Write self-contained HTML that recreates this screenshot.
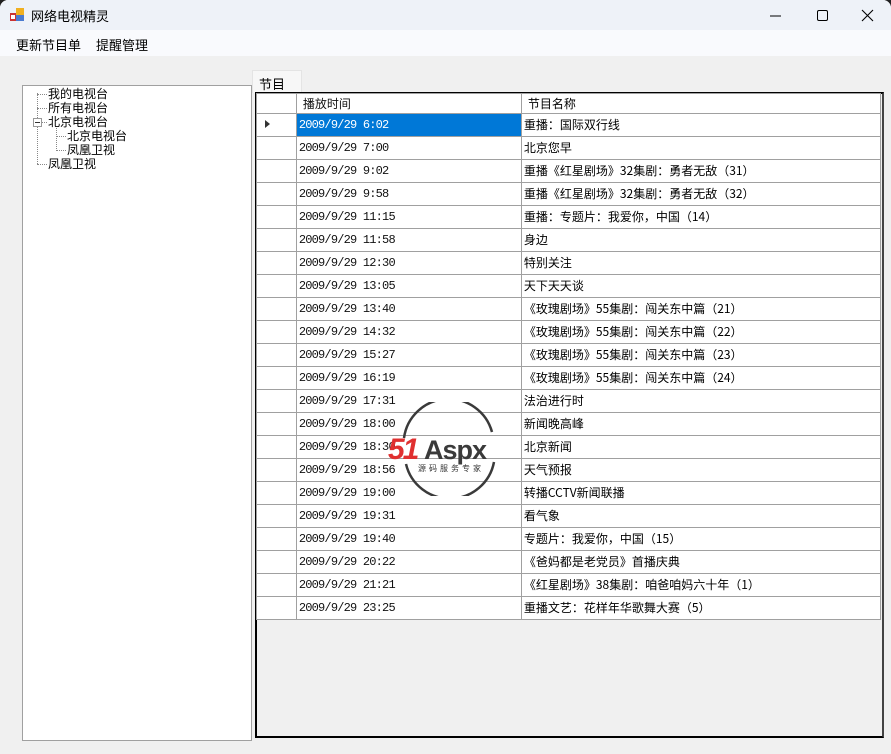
<!DOCTYPE html>
<html><head><meta charset="utf-8"><style>
*{margin:0;padding:0;box-sizing:border-box}
body{width:891px;height:754px;overflow:hidden;background:#202020;font-family:"Liberation Sans","Noto Sans CJK SC",sans-serif;font-size:12px;color:#000;position:relative}
#win{position:absolute;left:0;top:0;width:891px;height:754px;background:#f0f0f0;border-radius:8px 8px 0 0;overflow:hidden}
#title{position:absolute;left:0;top:0;width:891px;height:30px;background:#eef2f8}
#title .t{position:absolute;left:31px;top:6px;font-size:13px}
#menu{position:absolute;left:0;top:30px;width:891px;height:26px;background:#f9fafd}
#menu span{position:absolute;top:5px;font-size:13px}
#tree{position:absolute;left:22px;top:85px;width:230px;height:656px;background:#fff;border:1px solid #a0a0a0}
#tree div{position:absolute;font-size:12px;line-height:14px}
.dot{position:absolute;border-color:#888;border-style:dotted;border-width:0}
#tab{position:absolute;left:252px;top:70px;width:50px;height:23px;background:#f7f7f7;border:1px solid #e4e4e4;border-bottom:none;padding:3px 0 0 6px;font-size:13px}
#grid{position:absolute;left:255px;top:92px;width:629px;height:646px;border:2px solid #000;background:#f0f0f0;border-right-color:#444}
table{border-collapse:collapse;position:absolute;left:-1px;top:-1px}
td{border:1px solid #a0a0a0;height:23px;background:#fff;padding:0 0 0 2px;white-space:nowrap;vertical-align:middle}
td.rh{width:40px;background:#fff}
td.d{width:226px;font-family:"Liberation Mono","Noto Sans CJK SC",monospace;font-size:12px;letter-spacing:-0.8px;color:#111}
td.n{width:360px;font-size:12px;font-family:"Noto Sans CJK SC",sans-serif;line-height:14px}
tr.h td{height:20px;padding-left:6px}
tr.sel td.d{background:#0078d7;color:#fff}
</style></head><body><div id="win">
<div id="title">
<svg style="position:absolute;left:10px;top:8px" width="14" height="14"><rect x="0" y="5" width="7" height="8" fill="#c33"/><rect x="6" y="0" width="8" height="7" fill="#f0b020"/><rect x="6" y="7" width="8" height="6" fill="#4a7bd0"/><rect x="1" y="7" width="4" height="4" fill="#fff"/></svg>
<span class="t">网络电视精灵</span>
<svg style="position:absolute;left:770px;top:9px" width="110" height="14"><line x1="0" y1="7" x2="11" y2="7" stroke="#000"/><rect x="47.5" y="1.5" width="10" height="10" rx="1.5" fill="none" stroke="#000"/><path d="M92 1L103 12M103 1L92 12" stroke="#000" stroke-width="1.1"/></svg>
</div>
<div id="menu"><span style="left:16px">更新节目单</span><span style="left:96px">提醒管理</span></div>
<div id="tree">
<span class="dot" style="left:14px;top:7px;height:71px;border-left-width:1px"></span>
<span class="dot" style="left:14px;top:8px;width:10px;border-top-width:1px"></span>
<span class="dot" style="left:14px;top:22px;width:10px;border-top-width:1px"></span>
<span class="dot" style="left:14px;top:78px;width:10px;border-top-width:1px"></span>
<span class="dot" style="left:33px;top:42px;height:23px;border-left-width:1px"></span>
<span class="dot" style="left:33px;top:50px;width:10px;border-top-width:1px"></span>
<span class="dot" style="left:33px;top:64px;width:10px;border-top-width:1px"></span>
<span style="position:absolute;left:10px;top:32px;width:9px;height:9px;border:1px solid #999;background:#fff"></span>
<span style="position:absolute;left:12px;top:36px;width:5px;height:1px;background:#333"></span>
<span class="dot" style="left:19px;top:36px;width:5px;border-top-width:1px"></span>
<div style="left:25px;top:1px">我的电视台</div>
<div style="left:25px;top:15px">所有电视台</div>
<div style="left:25px;top:29px">北京电视台</div>
<div style="left:44px;top:43px">北京电视台</div>
<div style="left:44px;top:57px">凤凰卫视</div>
<div style="left:25px;top:71px">凤凰卫视</div>
</div>
<div id="tab">节目</div>
<div id="grid"><table>
<tr class="h"><td class="rh"></td><td class="d" style="font-family:'Liberation Sans','Noto Sans CJK SC',sans-serif;font-size:12px;letter-spacing:0">播放时间</td><td class="n">节目名称</td></tr>
<tr class="sel"><td class="rh"><svg width="10" height="10" style="margin-left:4px"><path d="M2 1L7 5L2 9Z" fill="#333"/></svg></td><td class="d">2009/9/29 6:02</td><td class="n">重播：国际双行线</td></tr>
<tr><td class="rh"></td><td class="d">2009/9/29 7:00</td><td class="n">北京您早</td></tr>
<tr><td class="rh"></td><td class="d">2009/9/29 9:02</td><td class="n">重播《红星剧场》32集剧：勇者无敌（31）</td></tr>
<tr><td class="rh"></td><td class="d">2009/9/29 9:58</td><td class="n">重播《红星剧场》32集剧：勇者无敌（32）</td></tr>
<tr><td class="rh"></td><td class="d">2009/9/29 11:15</td><td class="n">重播：专题片：我爱你，中国（14）</td></tr>
<tr><td class="rh"></td><td class="d">2009/9/29 11:58</td><td class="n">身边</td></tr>
<tr><td class="rh"></td><td class="d">2009/9/29 12:30</td><td class="n">特别关注</td></tr>
<tr><td class="rh"></td><td class="d">2009/9/29 13:05</td><td class="n">天下天天谈</td></tr>
<tr><td class="rh"></td><td class="d">2009/9/29 13:40</td><td class="n">《玫瑰剧场》55集剧：闯关东中篇（21）</td></tr>
<tr><td class="rh"></td><td class="d">2009/9/29 14:32</td><td class="n">《玫瑰剧场》55集剧：闯关东中篇（22）</td></tr>
<tr><td class="rh"></td><td class="d">2009/9/29 15:27</td><td class="n">《玫瑰剧场》55集剧：闯关东中篇（23）</td></tr>
<tr><td class="rh"></td><td class="d">2009/9/29 16:19</td><td class="n">《玫瑰剧场》55集剧：闯关东中篇（24）</td></tr>
<tr><td class="rh"></td><td class="d">2009/9/29 17:31</td><td class="n">法治进行时</td></tr>
<tr><td class="rh"></td><td class="d">2009/9/29 18:00</td><td class="n">新闻晚高峰</td></tr>
<tr><td class="rh"></td><td class="d">2009/9/29 18:30</td><td class="n">北京新闻</td></tr>
<tr><td class="rh"></td><td class="d">2009/9/29 18:56</td><td class="n">天气预报</td></tr>
<tr><td class="rh"></td><td class="d">2009/9/29 19:00</td><td class="n">转播CCTV新闻联播</td></tr>
<tr><td class="rh"></td><td class="d">2009/9/29 19:31</td><td class="n">看气象</td></tr>
<tr><td class="rh"></td><td class="d">2009/9/29 19:40</td><td class="n">专题片：我爱你，中国（15）</td></tr>
<tr><td class="rh"></td><td class="d">2009/9/29 20:22</td><td class="n">《爸妈都是老党员》首播庆典</td></tr>
<tr><td class="rh"></td><td class="d">2009/9/29 21:21</td><td class="n">《红星剧场》38集剧：咱爸咱妈六十年（1）</td></tr>
<tr><td class="rh"></td><td class="d">2009/9/29 23:25</td><td class="n">重播文艺：花样年华歌舞大赛（5）</td></tr>
</table></div>
<svg style="position:absolute;left:386px;top:402px" width="130" height="94">
<path d="M18 36A45 45 0 0 1 106 30" fill="none" stroke="#3a3a3a" stroke-width="2.5"/>
<path d="M108 60A45 45 0 0 1 20 62" fill="none" stroke="#3a3a3a" stroke-width="2.5"/>
<text x="2" y="57" font-family="Liberation Sans,sans-serif" font-weight="bold" font-style="italic" font-size="30" fill="#e03030" letter-spacing="-2">51</text>
<text x="38" y="57" font-family="Liberation Sans,sans-serif" font-weight="bold" font-size="27" fill="#3a3a3a" letter-spacing="-1">Aspx</text>
<text x="32" y="69" font-family="Noto Sans CJK SC,sans-serif" font-size="8" fill="#333" letter-spacing="3">源码服务专家</text>
</svg>
</div></body></html>
